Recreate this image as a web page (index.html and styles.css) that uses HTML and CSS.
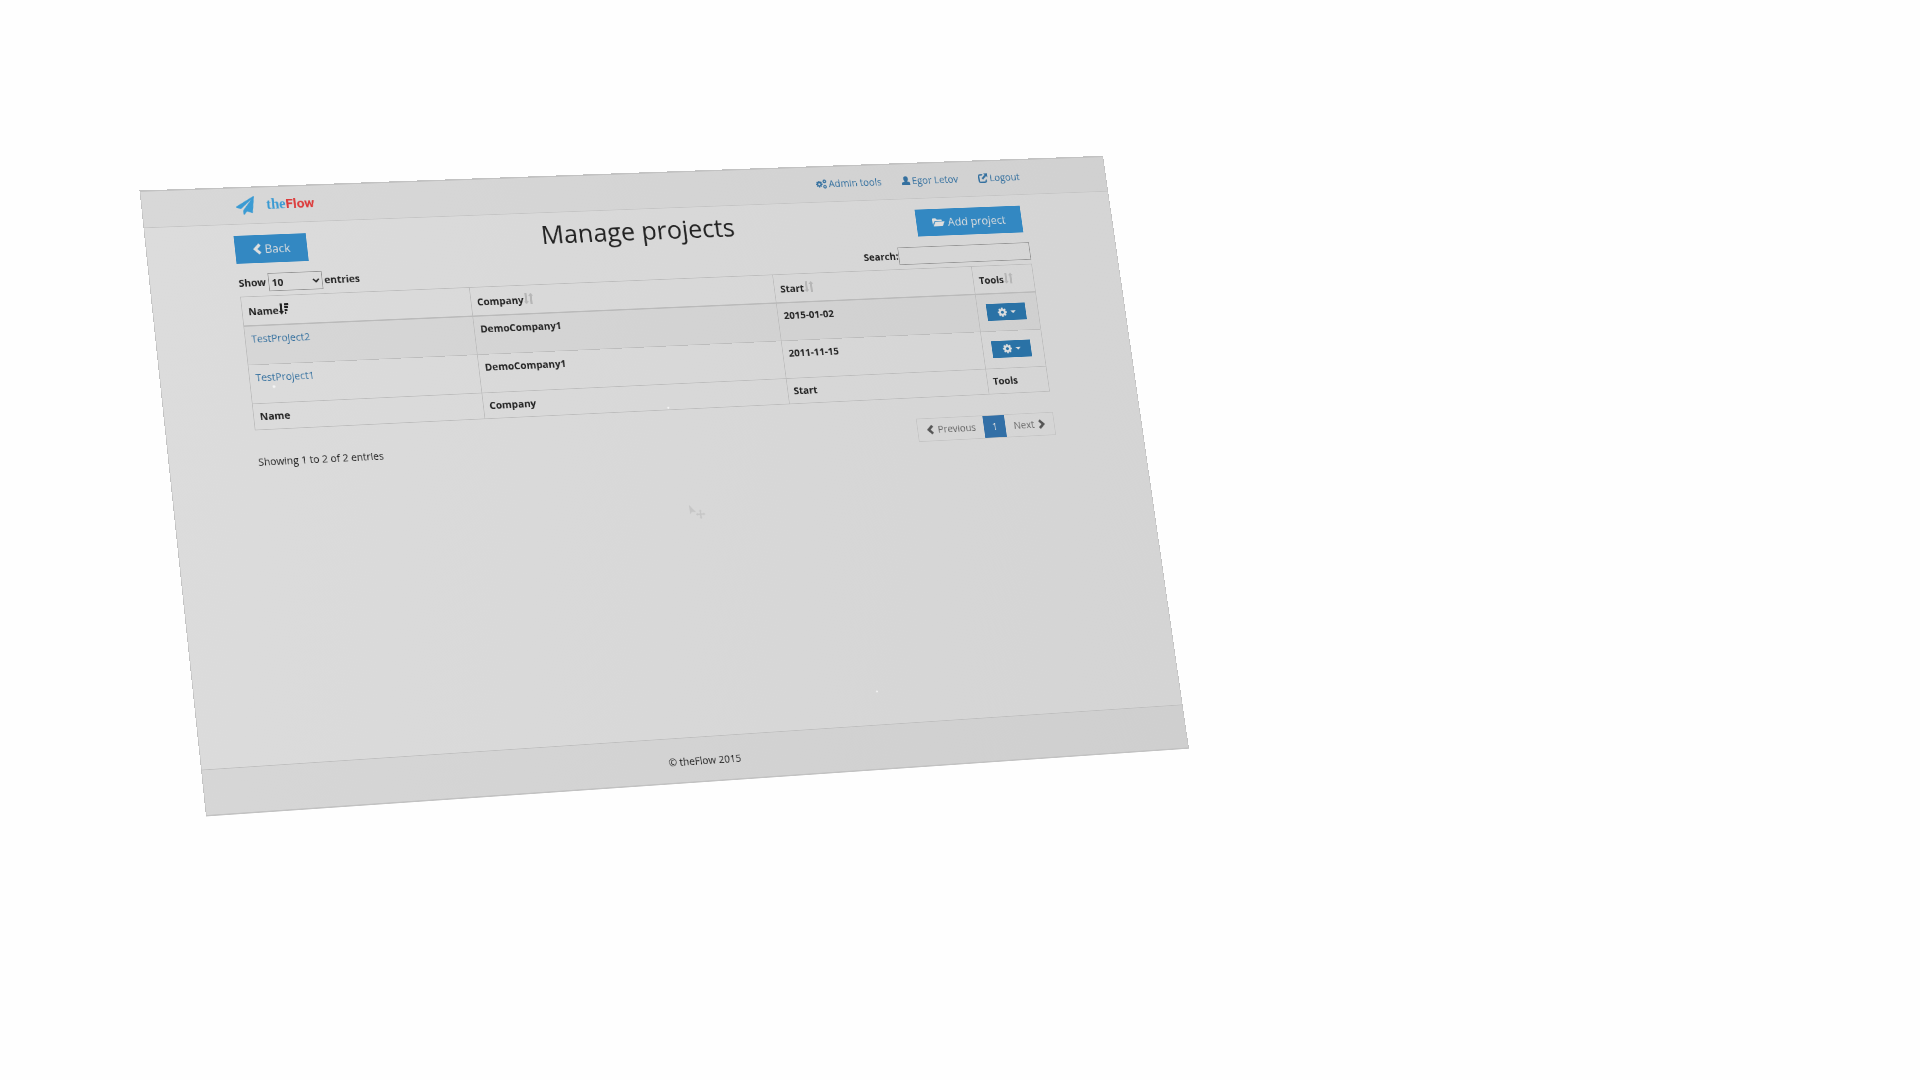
FILE: index.html
```html
<!DOCTYPE html>
<html lang="en">
<head>
<meta charset="utf-8">
<title>theFlow - Manage projects</title>
<link rel="stylesheet" href="styles.css">
</head>
<body>
<svg class="symbols" aria-hidden="true">
  <symbol id="plane" viewBox="0 0 1792 1792"><path d="M1764 11q33 24 27 64l-256 1536q-5 29-32 45-14 8-31 8-11 0-24-5l-453-185-242 295q-18 23-49 23-13 0-22-4-19-7-30.500-23.500t-11.500-36.500v-349l864-1059-1069 925-395-162q-37-14-40-55-2-40 32-59l1664-960q15-9 32-9 20 0 36 11z"/></symbol>
  <symbol id="cog" viewBox="100 100 1592 1592"><path d="M1152 896q0-106-75-181t-181-75-181 75-75 181 75 181 181 75 181-75 75-181zm512-109v222q0 12-8 23t-20 13l-185 28q-19 54-39 91 35 50 107 138 10 12 10 25t-9 23q-27 37-99 108t-94 71q-12 0-26-9l-138-108q-44 23-91 38-16 136-29 186-7 28-36 28h-222q-14 0-24.500-8.500t-11.500-21.500l-28-184q-49-16-90-37l-141 107q-10 9-25 9-14 0-25-11-126-114-165-168-7-10-7-23 0-12 8-23 15-21 51-66.500t54-70.500q-27-50-41-99l-183-27q-13-2-21-12.500t-8-23.500v-222q0-12 8-23t19-13l186-28q14-46 39-92-40-57-107-138-10-12-10-24 0-10 9-23 26-36 98.500-107.500t94.500-71.500q13 0 26 10l138 107q44-23 91-38 16-136 29-186 7-28 36-28h222q14 0 24.500 8.500t11.500 21.500l28 184q49 16 90 37l142-107q9-9 24-9 13 0 25 10 129 119 165 170 7 8 7 22 0 12-8 23-15 21-51 66.500t-54 70.500q26 50 41 98l183 28q13 2 21 12.500t8 23.500z"/></symbol>
  <symbol id="cogs" viewBox="0 0 16 14"><use href="#cog" x="0" y="2" width="10" height="10"/><use href="#cog" x="10" y="0" width="6" height="6"/><use href="#cog" x="10" y="8" width="6" height="6"/></symbol>
  <symbol id="user" viewBox="0 0 12 14"><path d="M6 0C8.300 0 9.500 1.500 9.500 3.800 9.500 5.300 8.700 6.700 7.800 7.400l2.700 1.100c1 .4 1.500 1 1.500 2V13H0v-2.500c0-1 .5-1.600 1.500-2l2.700-1.100C3.300 6.700 2.500 5.300 2.500 3.800 2.500 1.500 3.700 0 6 0z"/></symbol>
  <symbol id="share" viewBox="0 0 14 14"><path d="M7 1H3a3 3 0 0 0-3 3v7a3 3 0 0 0 3 3h6.500a3 3 0 0 0 3-3V8.500l-2 1.500v1a1 1 0 0 1-1 1H3a1 1 0 0 1-1-1V4a1 1 0 0 1 1-1h2.500z"/><path d="M8 0h6v6l-2-2-5 5-2-2 5-5z"/></symbol>
  <symbol id="left" viewBox="0 0 12 16"><path d="M9 0l3 3-5 5 5 5-3 3-8-8z"/></symbol>
  <symbol id="right" viewBox="0 0 12 16"><path d="M3 0L0 3l5 5-5 5 3 3 8-8z"/></symbol>
  <symbol id="folder" viewBox="0 0 18 14"><path d="M0 11V2a1 1 0 0 1 1-1h4l2 2h6a1 1 0 0 1 1 1v1H4.500a2 2 0 0 0-1.800 1z"/><path d="M1 13l3-6.200A1 1 0 0 1 5 6h13l-3 6.300a1 1 0 0 1-1 .7z"/></symbol>
  <symbol id="sort" viewBox="0 0 14 16"><path d="M2 0h3v12h2l-3.500 4L0 12h2zM9 16h3V4h2l-3.500-4L7 4h2z"/></symbol>
  <symbol id="sorted" viewBox="0 0 14 16"><path d="M2 0h3v11h2l-3.500 5L0 11h2zM8 0h6v3H8zM8 4h5v3H8zM8 8h4v3H8zM8 12h2v3H8z"/></symbol>
</svg>

<div class="sheet">
  <header class="topbar">
    <a class="brand" href="#"><svg class="plane"><use href="#plane"/></svg><span class="the">the<span class="flow">Flow</span></span></a>
    <nav class="nav">
      <a href="#"><svg class="i-cogs"><use href="#cogs"/></svg>Admin tools</a>
      <a href="#"><svg class="i-user"><use href="#user"/></svg>Egor Letov</a>
      <a href="#"><svg class="i-share"><use href="#share"/></svg>Logout</a>
    </nav>
  </header>

  <main class="content">
    <div class="heading">
      <button class="btn back" type="button"><svg class="i-chev"><use href="#left"/></svg>Back</button>
      <h1>Manage projects</h1>
      <button class="btn add" type="button"><svg class="i-folder"><use href="#folder"/></svg>Add project</button>
    </div>

    <div class="filters">
      <label>Show <select><option>10</option><option>25</option></select> entries</label>
      <label class="search">Search:<input type="search"></label>
    </div>

    <table class="projects">
      <colgroup><col class="c-name"><col><col class="c-start"><col class="c-tools"></colgroup>
      <thead>
        <tr><th>Name<svg class="sorted"><use href="#sorted"/></svg></th><th>Company<svg class="sort"><use href="#sort"/></svg></th><th>Start<svg class="sort"><use href="#sort"/></svg></th><th>Tools<svg class="sort"><use href="#sort"/></svg></th></tr>
      </thead>
      <tbody>
        <tr class="odd"><td><a href="#">TestProject2</a></td><td>DemoCompany1</td><td>2015-01-02</td><td><button class="tool" type="button" aria-label="Project tools"><svg class="i-cog"><use href="#cog"/></svg><span class="caret"></span></button></td></tr>
        <tr><td><a href="#">TestProject1</a></td><td>DemoCompany1</td><td>2011-11-15</td><td><button class="tool" type="button" aria-label="Project tools"><svg class="i-cog"><use href="#cog"/></svg><span class="caret"></span></button></td></tr>
      </tbody>
      <tfoot>
        <tr><th>Name</th><th>Company</th><th>Start</th><th>Tools</th></tr>
      </tfoot>
    </table>

    <div class="summary">
      <p>Showing 1 to 2 of 2 entries</p>
      <nav class="pages">
        <a href="#"><svg class="i-page"><use href="#left"/></svg>Previous</a>
        <a class="active" href="#">1</a>
        <a href="#">Next<svg class="i-page"><use href="#right"/></svg></a>
      </nav>
    </div>
  </main>

  <footer class="footer">© theFlow 2015</footer>

  <svg class="specks" viewBox="0 0 1390 876" aria-hidden="true">
    <g fill="#f4f4f4"><circle cx="154" cy="285" r="2"/><circle cx="702" cy="342" r="1.500"/><circle cx="948" cy="764" r="1.500"/></g>
    <path fill="#c6c6c6" d="M714 483v13l3-3 6 1zM729 490l2 3h-1v3h3v-1l3 2-3 2v-1h-3v3h1l-2 3-2-3h1v-3h-3v1l-3-2 3-2v1h3v-3h-1z"/>
  </svg>
</div>
</body>
</html>
```
FILE: styles.css
```css
* { box-sizing: border-box; }

body {
  margin: 0;
  min-height: 100vh;
  overflow: hidden;
  background: #fefefe;
  color: #222;
  font: 14px/20px "Open Sans", "Noto Sans", sans-serif;
}

svg { fill: currentColor; flex: none; }
.symbols { position: absolute; width: 0; height: 0; }
a { color: #34709f; text-decoration: none; }

/* The page lies on a tilted plane */
.sheet {
  position: relative;
  display: flex;
  flex-direction: column;
  width: 100%;
  max-width: 1390px;
  min-height: 876px;
  border: 1px solid #c2c2c2;
  border-top-width: 2px;
  border-bottom-width: 2px;
  background: linear-gradient(100deg, #dcdcdc, #d8d8d8 50%, #d4d4d4);
  transform-origin: 0 0;
  transform: matrix3d(0.7352448, -0.01902028, 0, 0.00003814987, 0.07015734, 0.6917978, 0, -0.00002794125, 0, 0, 1, 0, 139.5, 190.5, 0, 1);
}

.topbar {
  display: flex;
  justify-content: space-between;
  height: 52px;
  padding: 0 129px;
  border-bottom: 1px solid #c4c4c4;
  background: rgba(0, 0, 0, .015);
}

.brand { display: flex; gap: 16px; padding-top: 12px; color: #3b9bd3; }
.plane { width: 26px; height: 26px; }
.the { font: bold 20px/24px "Liberation Serif", serif; }
.flow { color: #dc3a3a; font: bold 19px/24px Roboto, "Open Sans", sans-serif; }

.nav { display: flex; gap: 30px; padding-top: 15px; }
.nav a { display: flex; align-items: center; gap: 3px; height: 20px; }
.i-cogs { width: 16px; height: 14px; }
.i-user { width: 12px; height: 14px; }
.i-share { width: 14px; height: 14px; }

.content { flex: 1; padding: 16px 129px 0 121px; }

.heading { display: grid; grid-template-columns: 1fr auto 1fr; align-items: start; }
h1 { margin: 0; font-size: 36px; line-height: 32px; font-weight: 400; }
.btn {
  display: flex;
  align-items: center;
  gap: 5px;
  height: 40px;
  padding: 0 24px;
  border: 0;
  background: #3388c2;
  color: #dedede;
  font: 16px/24px "Open Sans", "Noto Sans", sans-serif;
}
.back { justify-self: start; }
.add { justify-self: end; margin-right: 6px; }
.i-chev { width: 12px; height: 16px; }
.i-folder { width: 18px; height: 14px; }

.filters { display: flex; justify-content: space-between; margin-top: 15px; font-weight: 700; }
.filters label { display: flex; align-items: center; gap: 3px; }
.filters .search { gap: 0; }
select, input {
  height: 26px;
  border: 1px solid #969696;
  background: transparent;
  color: inherit;
  font: inherit;
}
select { width: 75px; padding: 0; border-radius: 0; }
input { width: 196px; padding: 0 4px; }

.projects { width: 100%; margin-top: 6px; border-collapse: collapse; table-layout: fixed; font-weight: 700; }
.c-name { width: 319px; }
.c-start { width: 293px; }
.c-tools { width: 90px; }
th, td { border: 1px solid #bcbcbc; text-align: left; vertical-align: top; padding: 8px; }
thead th { padding: 11px 8px 9px; border-bottom: 2px solid #bababa; }
td { height: 55px; }
td a { font-weight: 400; }
.odd { background: rgba(0, 0, 0, .02); }
.sort, .sorted { width: 14px; height: 16px; vertical-align: -1px; }
.sort { color: #b6b6b6; }
.tool {
  display: flex;
  align-items: center;
  justify-content: center;
  gap: 5px;
  width: 58px;
  height: 25px;
  margin: 6px 0 0 5px;
  padding: 0;
  border: 0;
  background: #2a72a6;
  color: #dedede;
}
.i-cog { width: 14px; height: 14px; }
.caret { border: 4px solid transparent; border-top-color: currentColor; border-bottom: 0; }

.summary { display: flex; justify-content: space-between; align-items: flex-start; margin-top: 30px; }
.summary p { margin: 5px 0; }
.pages { display: flex; border: 1px solid #c4c4c4; }
.pages a { display: flex; align-items: center; gap: 6px; height: 32px; padding: 0 12px; color: #666; }
.pages .active { background: #326fa6; color: #dedede; }
.i-page { width: 11px; height: 14px; color: #555; }

.footer {
  height: 62px;
  padding: 23px 129px 0 121px;
  border-top: 1px solid #bebebe;
  background: rgba(0, 0, 0, .02);
  text-align: center;
}

/* Dust and a pointer over the page */
.specks { position: absolute; inset: 0; width: 100%; pointer-events: none; }
```
